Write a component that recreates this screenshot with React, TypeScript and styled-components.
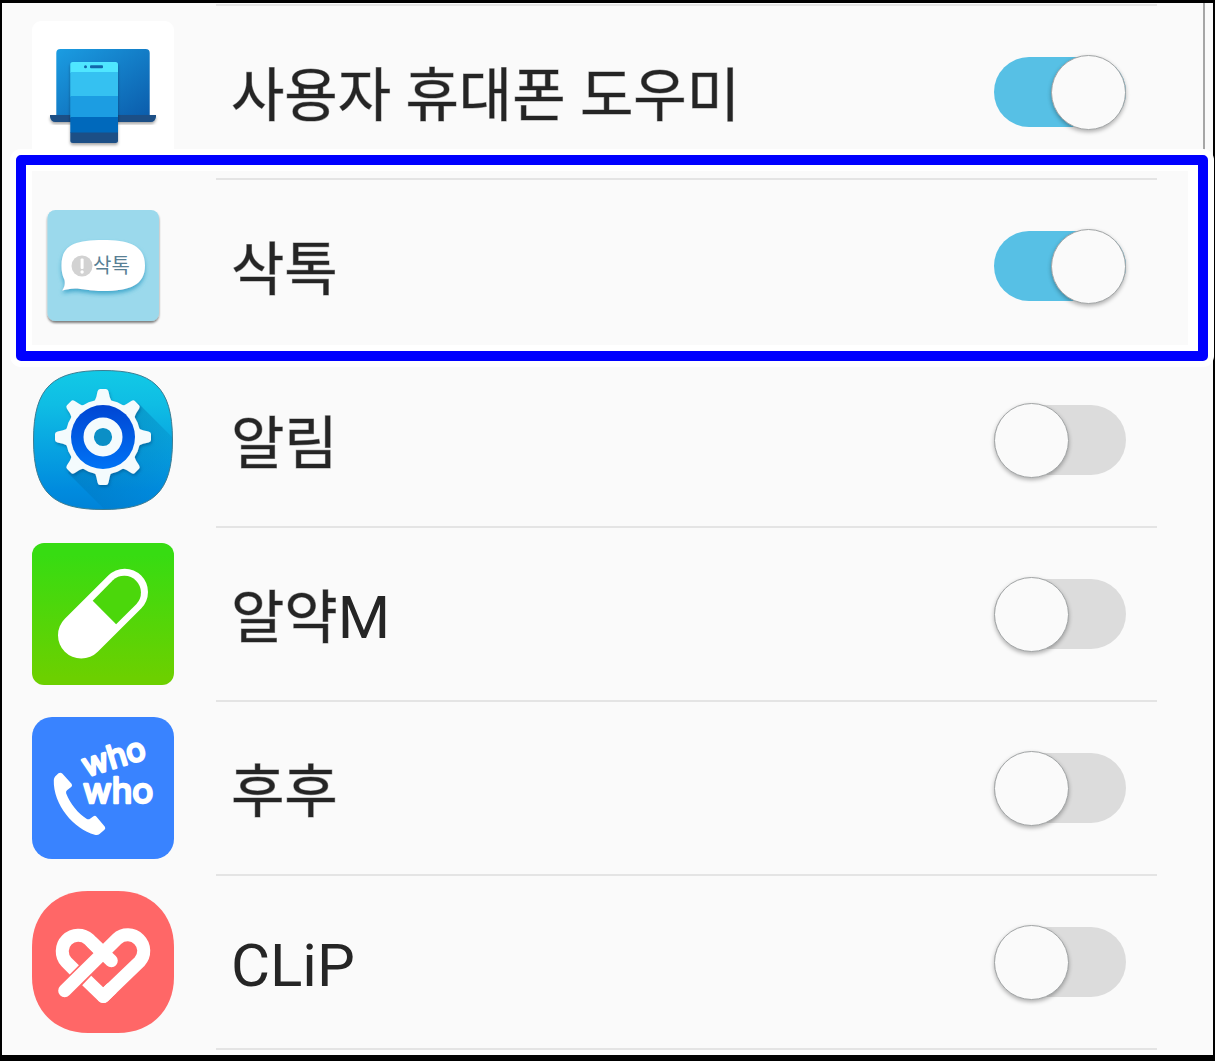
import React, { useState } from 'react';
import styled, { createGlobalStyle } from 'styled-components';

const GlobalStyle = createGlobalStyle`
  *, *::before, *::after { box-sizing: border-box; }
  body { margin: 0; background: #000; }
`;

const Screen = styled.main`
  min-height: 100vh;
  padding: 1px 56px 5px 30px;
  border: solid #000;
  border-width: 3px 2px 6px;
  background: #fafafa;
  color: #252525;
  font-family: Roboto, 'Noto Sans CJK KR', sans-serif;
  position: relative;
`;

const ScrollBar = styled.div`
  position: absolute;
  top: 0;
  right: 8px;
  width: 2px;
  height: 148px;
  background: #a6a6a6;
`;

const List = styled.ul`
  margin: 0;
  padding: 0;
  list-style: none;

  &::before {
    content: '';
    display: block;
    height: 2px;
    margin-left: 184px;
    background: #e6e6e6;
  }
`;

const Row = styled.li`
  position: relative;
  display: flex;
  height: 174px;
`;

const IconCell = styled.div`
  flex: none;
  width: 184px;
  padding-top: 15px;

  svg { display: block; }
`;

const Body = styled.div`
  flex: 1;
  display: flex;
  align-items: center;
  justify-content: space-between;
  padding: 0 31px 0 15px;
  border-bottom: 2px solid #e4e4e4;
`;

const Name = styled.label`
  padding-top: 8px;
  font-size: 60px;
  line-height: 80px;
  white-space: nowrap;
`;

const Hangul = styled.span`
  font-size: 58px;
  -webkit-text-stroke: 1px rgba(37, 37, 37, 0.45);
`;

const Toggle = styled.input`
  appearance: none;
  flex: none;
  display: flex;
  align-items: center;
  justify-content: flex-start;
  width: 132px;
  height: 70px;
  margin: 0;
  border-radius: 35px;
  background: #dcdcdc;
  cursor: pointer;

  &::before {
    content: '';
    flex: none;
    width: 75px;
    height: 75px;
    border: 1px solid #a2a5a6;
    border-radius: 50%;
    background: #fafafa;
    box-shadow: 0 2px 4px rgba(0, 0, 0, 0.3);
  }

  &:checked {
    justify-content: flex-end;
    background: #57c0e5;
  }
`;

const Highlight = styled.div`
  position: absolute;
  z-index: 1;
  inset: -25px -51px -7px -16px;
  border: 10px solid #00f;
  border-radius: 5px;
  box-shadow: 0 0 0 6px #fff, inset 0 0 0 6px #fff, inset -10px 0 0 #fff;
  pointer-events: none;
`;

const Art = ({ children }: { children: React.ReactNode }) => (
  <svg width="142" height="142" viewBox="0 0 142 142" aria-hidden="true">
    {children}
  </svg>
);

const CompanionIcon = () => (
  <Art>
    <defs>
      <linearGradient id="laptop" x1="0" y1="0" x2="1" y2="1">
        <stop offset="0" stopColor="#1b9de2" />
        <stop offset="1" stopColor="#0b5cab" />
      </linearGradient>
      <filter id="soft" x="-20%" y="-20%" width="140%" height="150%">
        <feDropShadow dx="0" dy="2" stdDeviation="1.4" floodOpacity="0.35" />
      </filter>
      <clipPath id="phone"><rect x="38.3" y="41" width="47.7" height="81" rx="2.5" /></clipPath>
    </defs>
    <rect width="142" height="142" rx="9" fill="#fff" />
    <path d="M24.3 96V32q0-4 4-4h85.400q4 0 4 4v64z" fill="url(#laptop)" />
    <path d="M18 94h106v2q-1 5-5 5H23q-4 0-5-5z" fill="#1b4f86" filter="url(#soft)" />
    <g filter="url(#soft)">
      <g clipPath="url(#phone)">
        <rect x="38" y="41" width="49" height="11" fill="#50e6ff" />
        <rect x="38" y="51" width="49" height="25" fill="#35c1f1" />
        <rect x="38" y="75" width="49" height="22" fill="#1b9de2" />
        <rect x="38" y="96" width="49" height="16" fill="#0669bc" />
        <rect x="38" y="111.500" width="49" height="11" fill="#1b4f86" />
      </g>
    </g>
    <circle cx="53.500" cy="45.700" r="1.500" fill="#1267ab" />
    <rect x="58" y="44.300" width="13" height="3" rx="1" fill="#1267ab" />
  </Art>
);

const TalkIcon = () => (
  <Art>
    <defs>
      <filter id="cardShadow" x="-10%" y="-10%" width="120%" height="125%">
        <feDropShadow dx="0" dy="2" stdDeviation="1.300" floodOpacity="0.5" />
      </filter>
      <filter id="bubbleShadow" x="-20%" y="-20%" width="140%" height="160%">
        <feDropShadow dx="0" dy="3" stdDeviation="2" floodColor="#2b9cc4" floodOpacity="0.8" />
      </filter>
    </defs>
    <rect x="15.500" y="15" width="111.500" height="111" rx="8" fill="#9bd9ec" filter="url(#cardShadow)" />
    <path
      d="M71 45c27 0 42 6 42 25.500S98 96 71 96c-13 0-21-2.500-28-2.500-5 0-9 1-12.700 2 2.200-3.500 3-6 2.200-10.500-2.300-5-3-9-3-14.500C29.500 50 43 45 71 45z"
      fill="#fff"
      filter="url(#bubbleShadow)"
    />
    <circle cx="50" cy="71" r="10.500" fill="#d2d2d2" />
    <rect x="48.600" y="63.500" width="3" height="10.500" rx="1" fill="#fff" />
    <circle cx="50.100" cy="77" r="1.700" fill="#fff" />
    <text x="61" y="78" fontSize="20" fill="#587f94" fontFamily="'Noto Sans CJK KR', sans-serif">삭톡</text>
  </Art>
);

const teeth = [0, 45, 90, 135, 180, 225, 270, 315];

const GearIcon = () => (
  <Art>
    <defs>
      <linearGradient id="gearBg" x1="0" y1="0" x2="0" y2="1">
        <stop offset="0" stopColor="#12cae6" />
        <stop offset="0.250" stopColor="#0fbde4" />
        <stop offset="0.850" stopColor="#008bde" />
        <stop offset="1" stopColor="#0083d8" />
      </linearGradient>
      <linearGradient id="gearCore" x1="0" y1="0" x2="0" y2="1">
        <stop offset="0" stopColor="#0045d3" />
        <stop offset="1" stopColor="#0073f5" />
      </linearGradient>
      <linearGradient id="castShadow" gradientUnits="userSpaceOnUse" x1="71" y1="68" x2="125" y2="122">
        <stop offset="0" stopColor="#006aa8" stopOpacity="0.4" />
        <stop offset="1" stopColor="#006aa8" stopOpacity="0.04" />
      </linearGradient>
      <filter id="gearShadow" x="-20%" y="-20%" width="140%" height="140%">
        <feDropShadow dx="1" dy="2" stdDeviation="1.500" floodColor="#004a80" floodOpacity="0.5" />
      </filter>
      <clipPath id="squircle">
        <path d="M71 1.500C120 1.500 140.500 17 140.500 71S120 140.500 71 140.500 1.500 125 1.500 71 22 1.500 71 1.500z" />
      </clipPath>
    </defs>
    <g clipPath="url(#squircle)">
      <rect width="142" height="142" fill="url(#gearBg)" />
      <path d="M106 34l60 60v80h-60L36 104z" fill="url(#castShadow)" />
    </g>
    <path
      d="M71 1.500C120 1.500 140.500 17 140.500 71S120 140.500 71 140.500 1.500 125 1.500 71 22 1.500 71 1.500z"
      fill="none" stroke="#3d7d93" strokeWidth="1"
    />
    <g fill="#f4fbfd" filter="url(#gearShadow)">
      <circle cx="71" cy="68" r="37.500" />
      {teeth.map((a) => (
        <path key={a} d="M60 34q3.500-2 4.300-6l1.200-5.500q.6-2.500 2.500-2.500h6q1.900 0 2.500 2.500l1.200 5.500q.8 4 4.300 6z" transform={`rotate(${a} 71 68)`} />
      ))}
    </g>
    <circle cx="71" cy="68" r="32" fill="url(#gearCore)" />
    <circle cx="71" cy="68" r="14.300" fill="#0b8fc6" stroke="#f4fbfd" strokeWidth="10.400" />
  </Art>
);

const PillIcon = () => (
  <Art>
    <defs>
      <linearGradient id="pillBg" x1="0" y1="0" x2="0" y2="1">
        <stop offset="0.080" stopColor="#37dc12" />
        <stop offset="0.950" stopColor="#6cd000" />
      </linearGradient>
    </defs>
    <rect width="142" height="142" rx="12" fill="url(#pillBg)" />
    <path d="M49.300 92.300L92.700 49" stroke="#fff" strokeWidth="46.600" strokeLinecap="round" />
    <path d="M60.700 57.700L80.900 37.300A16.700 16.700 0 0 1 104.500 60.900L84.100 81.300z" fill="#4bd70b" />
  </Art>
);

const CallIcon = () => (
  <Art>
    <rect width="142" height="142" rx="20" fill="#3983ff" />
    <path
      d="M26.500 56.300q2.200-1.300 4 .5l9 10q1.200 1.600 0 3l-4.500 3.500q-1.500 1.200-.8 3.200C38.500 87 46 96.500 54.500 101.700q2 1.200 3.500 0l3.500-2.500q1.700-1 3 .5l8.200 9.800q1.300 1.800-.2 3.300l-5 4.300q-2 1.500-4.800.6C42 112 21 88 21.800 63q.1-2 1.300-3.500z"
      fill="#fff"
    />
    <g fill="#fff" stroke="#fff" strokeWidth="2.6" strokeLinejoin="round" fontFamily="Inter, sans-serif" fontWeight="400">
      <text x="54" y="60" fontSize="32" transform="rotate(-17 54 60)">who</text>
      <text x="51" y="86" fontSize="35">who</text>
    </g>
  </Art>
);

const HeartIcon = () => (
  <Art>
    <path d="M56 0h30C119 0 142 23 142 56v30c0 33-23 56-56 56H56C23 142 0 119 0 86V56C0 23 23 0 56 0z" fill="#ff6767" />
    <g fill="none" stroke="#fff" strokeWidth="13" strokeLinejoin="round">
      <path d="M42.300 78.900L34.400 71A16 16 0 0 1 57 48.400L68 59.400" />
      <path d="M60 51.400L79.300 69.700" strokeLinecap="round" />
      <path d="M32.700 99.700L85 48A16 16 0 0 1 107.600 70.600L71.300 105.500" strokeLinecap="round" />
      <path d="M54.700 89.500L71.300 105.500L80 97" />
    </g>
  </Art>
);

type App = { id: string; icon: React.ReactNode; name?: string; latin?: string; on?: boolean; marked?: boolean };

const apps: App[] = [
  { id: 'companion', icon: <CompanionIcon />, name: '사용자 휴대폰 도우미', on: true },
  { id: 'talk', icon: <TalkIcon />, name: '삭톡', on: true, marked: true },
  { id: 'alerts', icon: <GearIcon />, name: '알림' },
  { id: 'pill', icon: <PillIcon />, name: '알약', latin: 'M' },
  { id: 'whowho', icon: <CallIcon />, name: '후후' },
  { id: 'clip', icon: <HeartIcon />, latin: 'CLiP' },
];

export default function App() {
  const [enabled, setEnabled] = useState<Record<string, boolean>>(
    Object.fromEntries(apps.map((a) => [a.id, !!a.on])),
  );

  return (
    <>
      <GlobalStyle />
      <Screen>
        <List>
          {apps.map((a) => (
            <Row key={a.id}>
              <IconCell>{a.icon}</IconCell>
              <Body>
                <Name htmlFor={a.id}>
                  {a.name && <Hangul>{a.name}</Hangul>}
                  {a.latin}
                </Name>
                <Toggle
                  id={a.id}
                  type="checkbox"
                  role="switch"
                  checked={enabled[a.id]}
                  onChange={(e) => setEnabled({ ...enabled, [a.id]: e.target.checked })}
                />
              </Body>
              {a.marked && <Highlight />}
            </Row>
          ))}
        </List>
        <ScrollBar />
      </Screen>
    </>
  );
}
